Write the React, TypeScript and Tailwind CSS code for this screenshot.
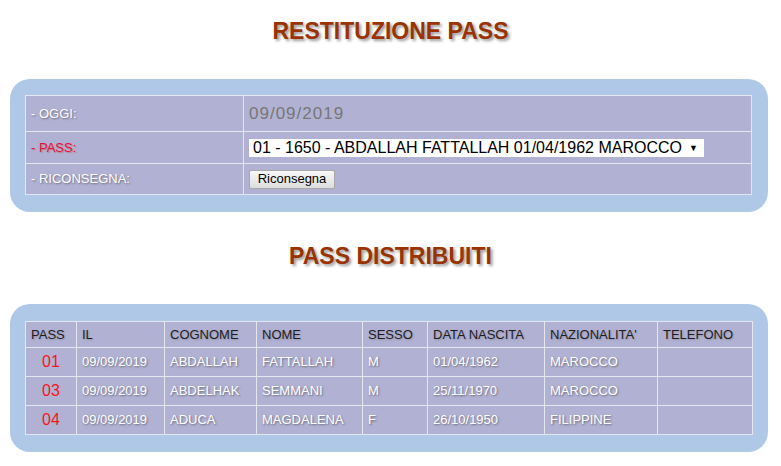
const passes = [
  { pass: '01', il: '09/09/2019', cognome: 'ABDALLAH', nome: 'FATTALLAH', sesso: 'M', nascita: '01/04/1962', naz: 'MAROCCO', tel: '' },
  { pass: '03', il: '09/09/2019', cognome: 'ABDELHAK', nome: 'SEMMANI', sesso: 'M', nascita: '25/11/1970', naz: 'MAROCCO', tel: '' },
  { pass: '04', il: '09/09/2019', cognome: 'ADUCA', nome: 'MAGDALENA', sesso: 'F', nascita: '26/10/1950', naz: 'FILIPPINE', tel: '' },
];

const headers = [
  { label: 'PASS', w: 'w-[51px]' },
  { label: 'IL', w: 'w-[88px]' },
  { label: 'COGNOME', w: 'w-[92px]' },
  { label: 'NOME', w: 'w-[106px]' },
  { label: 'SESSO', w: 'w-[65px]' },
  { label: 'DATA NASCITA', w: 'w-[117px]' },
  { label: "NAZIONALITA'", w: 'w-[113px]' },
  { label: 'TELEFONO', w: 'w-[95px]' },
];

function Title({ children }: { children: React.ReactNode }) {
  return (
    <h1 className="h-[23px] text-center text-[23px] leading-[23px] font-bold text-[#993300] [text-shadow:2px_2px_3px_#9a9a9a]">
      {children}
    </h1>
  );
}

const cell = 'border border-[#e6e6f0] px-[5px] align-middle';
const whiteText = 'text-white [text-shadow:1px_1px_2px_#6a6a7a]';

export default function App() {
  return (
    <div className="min-h-[466px] w-[781px] bg-white font-['Liberation_Sans',Arial,sans-serif] text-[13px]">
      <div className="pt-[20px]">
        <Title>RESTITUZIONE PASS</Title>
      </div>

      <div className="mt-[36px] ml-[10px] w-[758px] rounded-[20px] bg-[#b0c8e8] px-[15px] pt-[16px] pb-[17px]">
        <table className="w-[727px] border-collapse bg-[#b1b1d3]">
          <tbody>
            <tr>
              <td className={`${cell} h-[36px] w-[218px] px-[3px] ${whiteText}`}>- OGGI:</td>
              <td className={`${cell} px-[4px] text-[17px] tracking-[1px] text-[#777777]`}>09/09/2019</td>
            </tr>
            <tr>
              <td className={`${cell} h-[32px] px-[3px] text-[#e8103c] [text-shadow:1px_1px_1px_#b08080]`}>- PASS:</td>
              <td className={`${cell} px-[4px]`}>
                <div className="flex h-[18px] w-[455px] items-center justify-between bg-white pr-[6px] pl-[4px] text-[16px] leading-[18px] text-black">
                  <span>01 - 1650 - ABDALLAH FATTALLAH 01/04/1962 MAROCCO</span>
                  <span className="text-[9px]">▼</span>
                </div>
              </td>
            </tr>
            <tr>
              <td className={`${cell} h-[31px] px-[3px] ${whiteText}`}>- RICONSEGNA:</td>
              <td className={`${cell} px-[4px]`}>
                <button className="flex h-[19px] w-[86px] items-center justify-center rounded-[2px] border border-[#a8a8a8] bg-gradient-to-b from-[#f8f8f8] to-[#dddddd] text-[13px] text-black">
                  Riconsegna
                </button>
              </td>
            </tr>
          </tbody>
        </table>
      </div>

      <div className="mt-[33px]">
        <Title>PASS DISTRIBUITI</Title>
      </div>

      <div className="mt-[36px] ml-[10px] w-[758px] rounded-[20px] bg-[#b0c8e8] px-[15px] pt-[17px] pb-[17px]">
        <table className="w-[727px] table-fixed border-collapse bg-[#b1b1d3]">
          <thead>
            <tr>
              {headers.map((h) => (
                <th
                  key={h.label}
                  className={`${cell} ${h.w} h-[26px] text-left font-normal text-[#1e1e1e] [text-shadow:1px_1px_2px_#9090a8]`}
                >
                  {h.label}
                </th>
              ))}
            </tr>
          </thead>
          <tbody>
            {passes.map((p) => (
              <tr key={p.pass}>
                <td className={`${cell} h-[29px] text-center text-[16px] text-[#ee1a1a]`}>{p.pass}</td>
                <td className={`${cell} ${whiteText}`}>{p.il}</td>
                <td className={`${cell} ${whiteText}`}>{p.cognome}</td>
                <td className={`${cell} ${whiteText}`}>{p.nome}</td>
                <td className={`${cell} ${whiteText}`}>{p.sesso}</td>
                <td className={`${cell} ${whiteText}`}>{p.nascita}</td>
                <td className={`${cell} ${whiteText}`}>{p.naz}</td>
                <td className={`${cell} ${whiteText}`}>{p.tel}</td>
              </tr>
            ))}
          </tbody>
        </table>
      </div>
    </div>
  );
}
